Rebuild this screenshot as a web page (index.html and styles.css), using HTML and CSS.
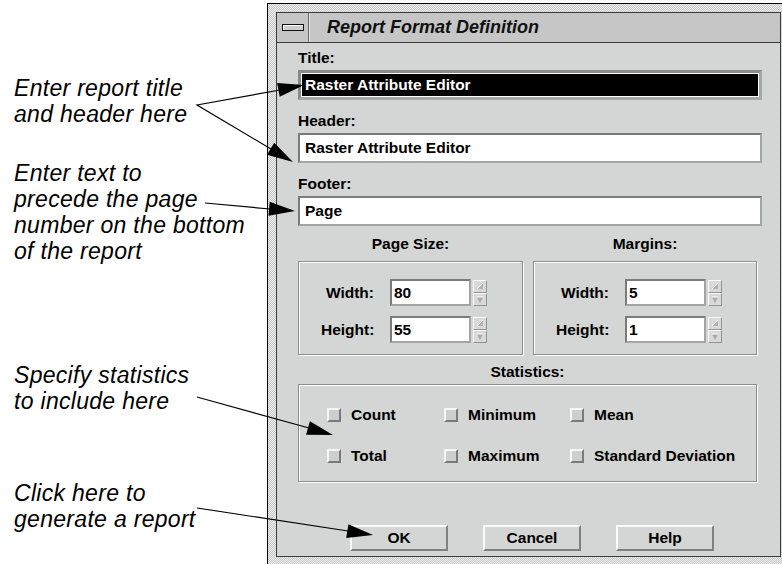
FILE: index.html
```html
<!DOCTYPE html>
<html lang="en">

<head>
  <meta charset="UTF-8">
  <meta name="viewport" content="width=device-width, initial-scale=1.0">
  <title>Report Format Definition</title>
  <link rel="stylesheet" href="styles.css">
</head>

<body>
  <div class="page">
    <!-- callouts on the left -->
    <div class="notes">
      <p class="note note-title">Enter report title<br>and header here</p>
      <p class="note note-footer">Enter text to<br>precede the page<br>number on the bottom<br>of the report</p>
      <p class="note note-stats">Specify statistics<br>to include here</p>
      <p class="note note-ok">Click here to<br>generate a report</p>
    </div>

    <!-- the dialog -->
    <div class="window">
      <div class="frame">
        <div class="titlebar">
          <div class="menu-btn"><span class="menu-bar"></span></div>
          <span class="title">Report Format Definition</span>
        </div>

        <div class="content">
          <div class="field">
            <label>Title:</label>
            <input class="text selected" type="text" value="Raster Attribute Editor">
          </div>
          <div class="field">
            <label>Header:</label>
            <input class="text" type="text" value="Raster Attribute Editor">
          </div>
          <div class="field">
            <label>Footer:</label>
            <input class="text" type="text" value="Page">
          </div>

          <div class="sizes">
            <div class="group">
              <div class="group-label">Page Size:</div>
              <div class="box">
                <div class="spin-row">
                  <span class="spin-label">Width:</span>
                  <input class="num" type="text" value="80">
                  <div class="spin">
                    <span class="arrow"><svg width="12" height="11" viewBox="0 0 12 11"><polygon points="3,8 9,8 9,2" fill="#b3b3b3"/><line x1="3" y1="8" x2="9" y2="2" stroke="#fff" stroke-width="1"/></svg></span>
                    <span class="arrow"><svg width="12" height="11" viewBox="0 0 12 11"><polygon points="3,3 9,3 6,9" fill="#a8a8a8"/><line x1="3" y1="3" x2="9" y2="3" stroke="#fff" stroke-width="1"/></svg></span>
                  </div>
                </div>
                <div class="spin-row">
                  <span class="spin-label">Height:</span>
                  <input class="num" type="text" value="55">
                  <div class="spin">
                    <span class="arrow"><svg width="12" height="11" viewBox="0 0 12 11"><polygon points="3,8 9,8 9,2" fill="#b3b3b3"/><line x1="3" y1="8" x2="9" y2="2" stroke="#fff" stroke-width="1"/></svg></span>
                    <span class="arrow"><svg width="12" height="11" viewBox="0 0 12 11"><polygon points="3,3 9,3 6,9" fill="#a8a8a8"/><line x1="3" y1="3" x2="9" y2="3" stroke="#fff" stroke-width="1"/></svg></span>
                  </div>
                </div>
              </div>
            </div>
            <div class="group">
              <div class="group-label">Margins:</div>
              <div class="box">
                <div class="spin-row">
                  <span class="spin-label">Width:</span>
                  <input class="num" type="text" value="5">
                  <div class="spin">
                    <span class="arrow"><svg width="12" height="11" viewBox="0 0 12 11"><polygon points="3,8 9,8 9,2" fill="#b3b3b3"/><line x1="3" y1="8" x2="9" y2="2" stroke="#fff" stroke-width="1"/></svg></span>
                    <span class="arrow"><svg width="12" height="11" viewBox="0 0 12 11"><polygon points="3,3 9,3 6,9" fill="#a8a8a8"/><line x1="3" y1="3" x2="9" y2="3" stroke="#fff" stroke-width="1"/></svg></span>
                  </div>
                </div>
                <div class="spin-row">
                  <span class="spin-label">Height:</span>
                  <input class="num" type="text" value="1">
                  <div class="spin">
                    <span class="arrow"><svg width="12" height="11" viewBox="0 0 12 11"><polygon points="3,8 9,8 9,2" fill="#b3b3b3"/><line x1="3" y1="8" x2="9" y2="2" stroke="#fff" stroke-width="1"/></svg></span>
                    <span class="arrow"><svg width="12" height="11" viewBox="0 0 12 11"><polygon points="3,3 9,3 6,9" fill="#a8a8a8"/><line x1="3" y1="3" x2="9" y2="3" stroke="#fff" stroke-width="1"/></svg></span>
                  </div>
                </div>
              </div>
            </div>
          </div>

          <div class="stats-label">Statistics:</div>
          <div class="stats">
            <div class="check"><span class="toggle"></span>Count</div>
            <div class="check"><span class="toggle"></span>Minimum</div>
            <div class="check"><span class="toggle"></span>Mean</div>
            <div class="check"><span class="toggle"></span>Total</div>
            <div class="check"><span class="toggle"></span>Maximum</div>
            <div class="check"><span class="toggle"></span>Standard Deviation</div>
          </div>

          <div class="buttons">
            <button class="btn">OK</button>
            <button class="btn">Cancel</button>
            <button class="btn">Help</button>
          </div>
        </div>
      </div>
    </div>

    <!-- leader lines -->
    <svg class="arrows" width="782" height="564" viewBox="0 0 782 564">
      <g stroke="#000" stroke-width="1.2" fill="none">
        <polyline points="280,90 197,105 271,149"/>
        <line x1="205" y1="203" x2="270" y2="209"/>
        <line x1="197" y1="397" x2="309" y2="428"/>
        <line x1="197" y1="508" x2="348" y2="531"/>
      </g>
      <g fill="#000">
        <polygon points="304,85 279.7,96.7 277.1,82.9"/>
        <polygon points="293,162 267,154.7 274.2,142.7"/>
        <polygon points="295,211 269.7,201.7 268.5,215.7"/>
        <polygon points="333,435 306.1,434.7 309.9,421.3"/>
        <polygon points="373,535 346.2,538 348.4,524.2"/>
      </g>
    </svg>
  </div>
</body>

</html>
```

FILE: styles.css
```css
* {
  margin: 0;
  padding: 0;
  box-sizing: border-box;
}

body {
  width: 782px;
  height: 564px;
  overflow: hidden;
  background: #fff;
  font-family: "Liberation Sans", Arial, sans-serif;
}

.page {
  position: relative;
  display: flex;
  height: 564px;
}

/* callouts */
.notes {
  flex: none;
  width: 267px;
  padding-left: 14px;
}

.note {
  font-style: italic;
  font-size: 23px;
  line-height: 26px;
  letter-spacing: 0.3px;
  color: #000;
}

.note-title {
  margin-top: 75px;
}

.note-footer {
  margin-top: 33px;
}

.note-stats {
  margin-top: 98px;
}

.note-ok {
  margin-top: 66px;
}

.arrows {
  position: absolute;
  left: 0;
  top: 0;
  pointer-events: none;
}

/* window frame */
.window {
  flex: none;
  align-self: flex-start;
  margin-top: 3px;
  padding: 8px 8px 10px 8px;
  border-top: 1px solid #000;
  border-left: 1px solid #000;
  background: repeating-conic-gradient(#c9c9c9 0 25%, #ececec 0 50%) 0 0 / 2px 2px;
}

.frame {
  width: 505px;
  border: 1px solid #3a3a3a;
}

.titlebar {
  display: flex;
  align-items: center;
  height: 30px;
  background: #c6c6c6;
  border-bottom: 1px solid #3a3a3a;
}

.menu-btn {
  display: flex;
  align-items: center;
  justify-content: center;
  width: 32px;
  height: 100%;
  border-right: 1px solid #6a6a6a;
  box-shadow: 1px 0 0 #e4e4e4;
}

.menu-bar {
  width: 22px;
  height: 7px;
  background: #cfcfcf;
  border: 1px solid #111;
  box-shadow: inset 1px 1px 0 #fff;
}

.title {
  margin-left: 18px;
  font-size: 18px;
  font-weight: bold;
  font-style: italic;
  color: #111;
}

/* dialog body */
.content {
  background: #d3d6d4;
  padding: 5px 0 5px 21px;
  font-size: 15.5px;
  font-weight: bold;
  color: #000;
}

.field label {
  display: block;
  height: 20px;
  line-height: 20px;
  margin-bottom: 2px;
}

.field + .field {
  margin-top: 11px;
}

.text {
  display: block;
  width: 464px;
  height: 30px;
  padding: 0 5px;
  border: 2px solid;
  border-color: #7b7b7b #a4a4a4 #a4a4a4 #7b7b7b;
  background: #fff;
  font: inherit;
  color: #000;
  outline: none;
}

.text.selected {
  border-width: 3px;
  border-color: #8a8a8a #a8a8a8 #a8a8a8 #8a8a8a;
  padding-left: 4px;
  background: #000;
  color: #fff;
  box-shadow: inset 0 0 0 1px #fff;
}

.sizes {
  display: grid;
  grid-template-columns: 225px 224px;
  column-gap: 10px;
  margin-top: 8px;
}

.group-label {
  height: 20px;
  line-height: 20px;
  margin-bottom: 7px;
  text-align: center;
}

.box {
  height: 94px;
  padding: 17px 0 0 22px;
  border: 1px solid #8c8c8c;
  box-shadow: inset 1px 1px 0 #fff, 1px 1px 0 #fff;
}

.spin-row {
  display: flex;
  align-items: center;
}

.spin-row + .spin-row {
  margin-top: 10px;
}

.spin-label {
  width: 53px;
  text-align: right;
}

.num {
  width: 81px;
  height: 27px;
  margin-left: 16px;
  padding-left: 2px;
  border: 2px solid;
  border-color: #7b7b7b #a4a4a4 #a4a4a4 #7b7b7b;
  background: #fff;
  font: inherit;
  color: #000;
  outline: none;
}

.spin {
  display: flex;
  flex-direction: column;
  margin-left: 2px;
}

.arrow {
  display: flex;
  width: 14px;
  height: 13px;
  background: #d8d9d8;
  border: 1px solid;
  border-color: #fbfbfb #939393 #939393 #fbfbfb;
}

.stats-label {
  width: 459px;
  height: 20px;
  line-height: 20px;
  margin-top: 7px;
  margin-bottom: 2px;
  text-align: center;
}

.stats {
  display: grid;
  grid-template-columns: 117px 126px auto;
  grid-auto-rows: 20px;
  align-content: start;
  row-gap: 21px;
  width: 459px;
  height: 98px;
  padding: 20px 0 0 28px;
  border: 1px solid #8c8c8c;
  box-shadow: inset 1px 1px 0 #fff, 1px 1px 0 #fff;
}

.check {
  display: flex;
  align-items: center;
}

.toggle {
  width: 14px;
  height: 14px;
  margin-right: 10px;
  background: #cdcfce;
  border: 2px solid;
  border-color: #f6f6f6 #7a7a7a #7a7a7a #f6f6f6;
}

.buttons {
  display: flex;
  gap: 35px;
  margin-top: 43px;
  margin-left: 52px;
}

.btn {
  width: 98px;
  height: 26px;
  border: 2px solid;
  border-color: #fafafa #7f7f7f #7f7f7f #fafafa;
  background: #d3d6d4;
  font: inherit;
  color: #000;
}
```
